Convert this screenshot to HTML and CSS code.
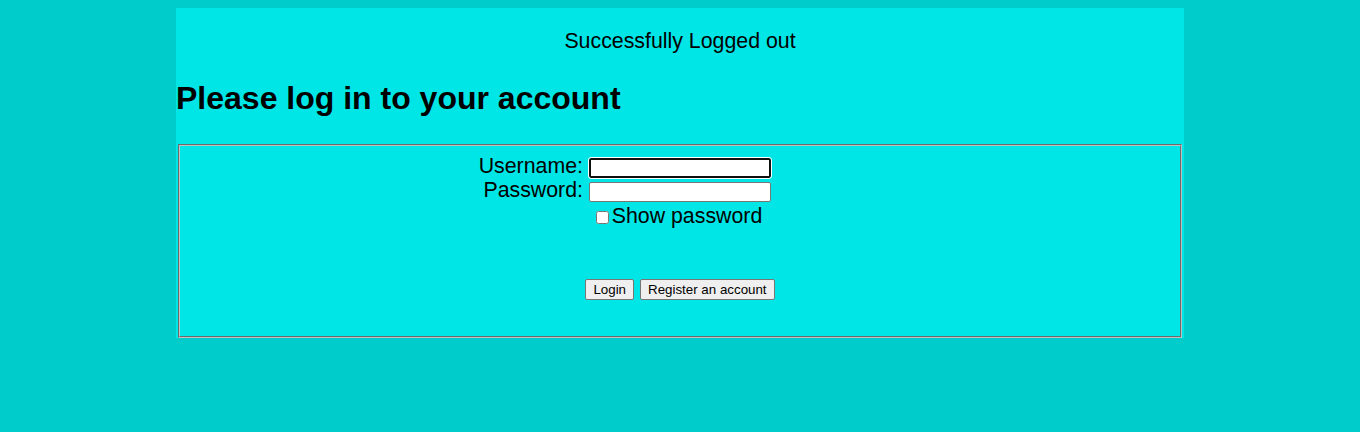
FILE: index.html
```html
<!DOCTYPE html>
<html>
<head>
<meta charset="utf-8">
<title>Login</title>
<link rel="stylesheet" href="styles.css">
</head>
<body>
<div class="page">
  <p class="status">Successfully Logged out</p>
  <h1 class="title">Please log in to your account</h1>
  <form class="login-form" onsubmit="return false;">
    <fieldset class="box">
      <div class="grid">
        <label class="lbl" for="username">Username:</label>
        <input class="field field-focus" type="text" id="username" name="username">
        <span class="pad"></span>
        <label class="lbl" for="password">Password:</label>
        <input class="field" type="password" id="password" name="password">
        <span class="pad"></span>
        <span class="pad"></span>
        <label class="show"><input class="chk" type="checkbox">Show password</label>
        <span class="pad"></span>
      </div>
      <div class="buttons">
        <button class="btn" type="submit">Login</button>
        <button class="btn" type="button">Register an account</button>
      </div>
    </fieldset>
  </form>
</div>
</body>
</html>
```
FILE: styles.css
```css
html, body {
  background: #00cccc;
}
body {
  margin: 8px;
  font-family: "Liberation Sans", Arial, sans-serif;
  color: #000;
}
.page {
  width: 1008px;
  margin: 0 auto;
  background: #00e6e6;
  display: flow-root;
}
.status {
  margin: 0;
  padding-top: 21px;
  font-size: 21.333px;
  line-height: 24px;
  text-align: center;
}
.title {
  margin: 27px 0 0 0;
  font-size: 32px;
  line-height: 37px;
  font-weight: bold;
}
.login-form {
  margin: 27px 0 0 0;
}
.box {
  margin: 0 2px;
  padding: 8px 12px 36px 12px;
  border: 2px groove #c0c0c0;
  min-width: 0;
}
.grid {
  display: grid;
  grid-template-columns: 1fr 182px 1fr;
  grid-auto-rows: 24px;
  column-gap: 6px;
  align-items: end;
}
.lbl {
  justify-self: end;
  font-size: 21.333px;
  line-height: 24px;
  align-self: start;
}
.field {
  box-sizing: border-box;
  width: 182px;
  height: 20px;
  margin: 0;
  padding: 1px 2px;
  border: 1px solid #767676;
  border-radius: 2px;
  background: #fff;
  font: 13.333px "Liberation Sans", Arial, sans-serif;
}
.field-focus {
  border: 2px solid #101010;
  outline: 1px solid #ffffff;
}
.show {
  justify-self: center;
  align-self: start;
  margin-top: 2px;
  margin-right: 2px;
  font-size: 21.333px;
  line-height: 24px;
  white-space: nowrap;
  display: flex;
  align-items: baseline;
}
.chk {
  width: 13px;
  height: 13px;
  margin: 0 3px 0 0;
  position: relative;
  top: 1px;
}
.buttons {
  margin-top: 53px;
  display: flex;
  justify-content: center;
  gap: 6px;
}
.btn {
  box-sizing: border-box;
  height: 21px;
  margin: 0;
  padding: 0 7px;
  border: 1px solid #767676;
  border-radius: 2px;
  background: #efefef;
  color: #000;
  font: 13.333px "Liberation Sans", Arial, sans-serif;
  line-height: 19px;
}
```
